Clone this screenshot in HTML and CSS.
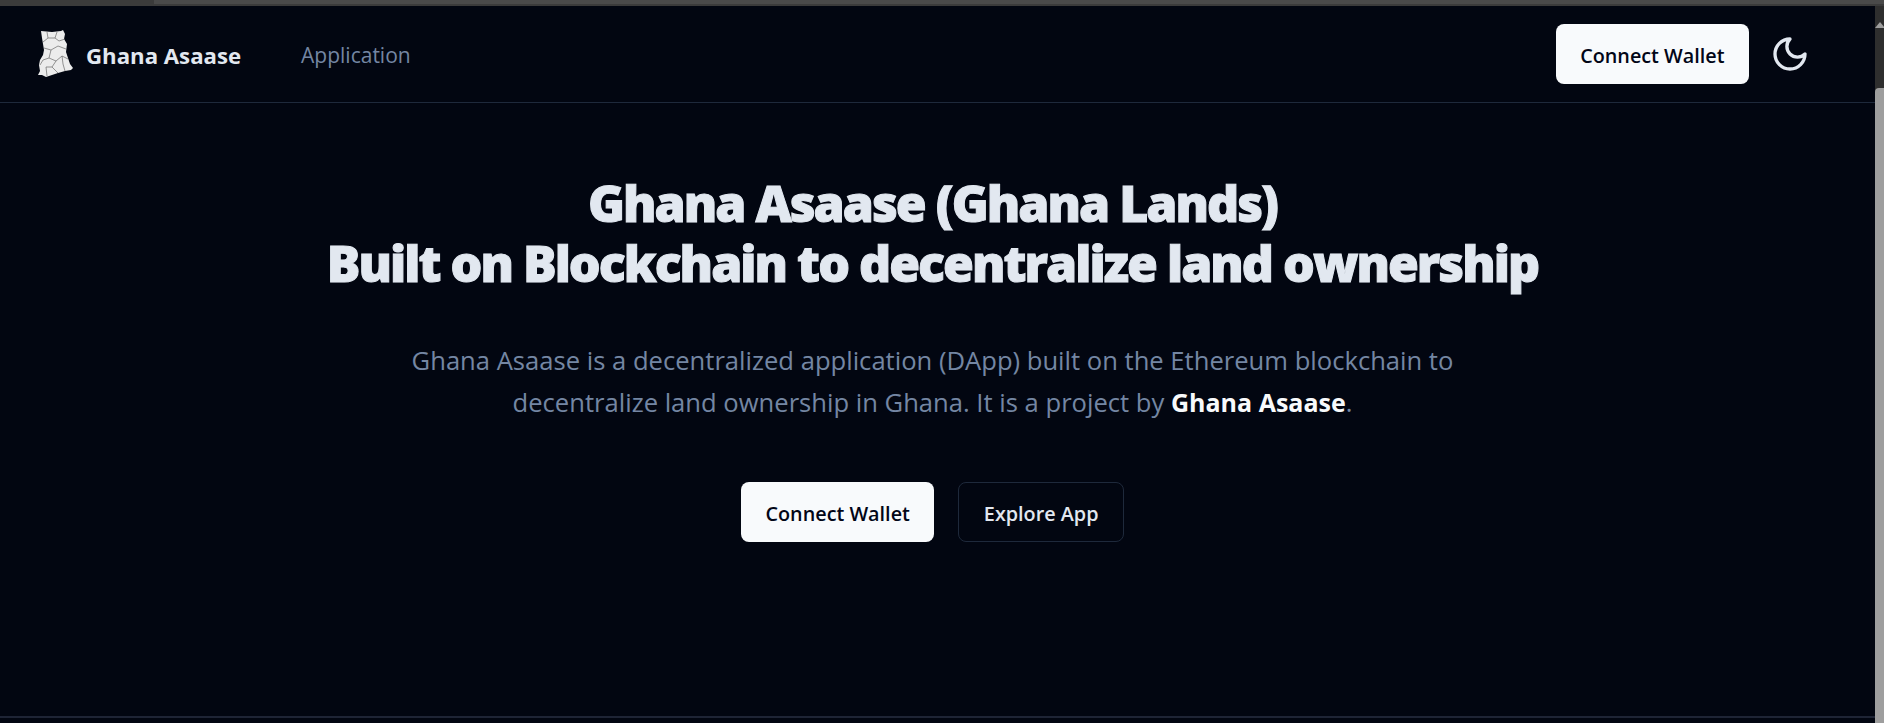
FILE: index.html
```html
<!DOCTYPE html>
<html>

<head>
  <title>Ghana Asaase</title>
  <link rel="stylesheet" href="styles.css">
</head>
<body>
<div class="top-strip"><div class="top-strip-light"></div></div>
<div class="window">
  <div class="page">
    <nav class="navbar">
      <div class="nav-left">
        <a class="brand" href="#">
          <svg class="brand-map" viewBox="0 0 36 48" width="36" height="48">
            <path fill="#ececec" d="M3 1 L14 2 L23 1 L25 0 L27 4 L26 9 L29 14 L28 22 L30 28 L32 34 L35 38 L33 40 L27 41 L20 43 L14 45 L8 47 L4 45 L0 45 L2 41 L1 35 L2 30 L5 25 L6 20 L5 14 L4 8 Z"/>
            <path fill="none" stroke="#6a6a6a" stroke-width="0.7" d="M9 2 L10 8 L5 12 M19 2 L17 8 L21 11 L27 9 M10 8 L17 8 M6 18 L13 20 L20 16 L28 19 M13 20 L11 28 L5 30 L2 35 M11 28 L18 31 L24 26 L30 29 M18 31 L14 37 L8 37 L9 46 M14 37 L20 43 M24 26 L25 34 L27 41"/>
          </svg>
          <span class="brand-name">Ghana Asaase</span>
        </a>
        <a class="nav-link" href="#">Application</a>
      </div>
      <div class="nav-right">
        <button class="btn btn-light">Connect Wallet</button>
        <svg class="moon" viewBox="0 0 24 24" width="40" height="40" fill="none" stroke="#e2e8f0" stroke-width="2" stroke-linecap="round" stroke-linejoin="round">
          <path d="M12 3a6 6 0 0 0 9 9 9 9 0 1 1-9-9Z"/>
        </svg>
      </div>
    </nav>
    <main class="hero">
      <h1>Ghana Asaase (Ghana Lands)<br>Built on Blockchain to decentralize land ownership</h1>
      <p class="lead">Ghana Asaase is a decentralized application (DApp) built on the Ethereum blockchain to decentralize land ownership in Ghana. It is a project by <b>Ghana Asaase</b>.</p>
      <div class="hero-buttons">
        <button class="btn btn-light">Connect Wallet</button>
        <button class="btn btn-dark">Explore App</button>
      </div>
    </main>
  </div>
  <div class="scrollbar">
    <div class="scroll-arrow"></div>
    <div class="scroll-thumb"></div>
  </div>
</div>
</body>

</html>
```

FILE: styles.css
```css
html, body {
  height: 100%;
}
body {
  margin: 0;
  overflow: hidden;
  display: flex;
  flex-direction: column;
  background-color: #020611;
  font-family: "Open Sans", "Noto Sans", sans-serif;
}
.top-strip {
  height: 6px;
  background-color: #3b3b3b;
  display: flex;
  justify-content: flex-end;
}
.top-strip-light {
  width: 1730px;
  height: 4px;
  background-color: #4a4a4a;
}
.window {
  flex: 1;
  display: flex;
  min-height: 0;
}
.page {
  flex: 1;
  display: flex;
  flex-direction: column;
  border-bottom: 2px solid #1e2435;
  margin-bottom: 5px;
}
.navbar {
  height: 97px;
  box-sizing: border-box;
  border-bottom: 1px solid #1e293b;
  padding: 0 65px 0 38px;
  display: flex;
  justify-content: space-between;
  align-items: center;
}
.nav-left, .nav-right, .brand {
  display: flex;
  align-items: center;
}
.brand {
  gap: 12px;
  text-decoration: none;
}
.brand-name {
  padding-top: 2px;
  color: #e2e8f0;
  font-size: 22.2px;
  font-weight: 700;
}
.nav-link {
  margin-left: 60px;
  padding-top: 2px;
  color: #7486a3;
  font-size: 21px;
  text-decoration: none;
}
.nav-right {
  gap: 21px;
}
.btn {
  height: 60px;
  padding: 2px 24.5px 0;
  border-radius: 8px;
  font-family: inherit;
  font-size: 19.8px;
  font-weight: 600;
}
.btn-light {
  background-color: #f8fafc;
  color: #020617;
  border: none;
}
.btn-dark {
  background-color: transparent;
  color: #e2e8f0;
  border: 1px solid #1e293b;
}
.hero {
  display: flex;
  flex-direction: column;
  align-items: center;
  padding: 70px 10px 0 0;
}
h1 {
  margin: 0;
  color: #e2e8f0;
  font-size: 50px;
  font-weight: 800;
  line-height: 60px;
  letter-spacing: -1.98px;
  -webkit-text-stroke: 1px #e2e8f0;
  text-align: center;
}
.lead {
  width: 1100px;
  margin: 47px 0 0;
  color: #7486a3;
  font-size: 25.6px;
  line-height: 41.5px;
  text-align: center;
}
.lead b {
  color: #f8fafc;
  font-size: 25px;
  font-weight: 700;
}
.hero-buttons {
  display: flex;
  gap: 24px;
  margin-top: 59px;
}
.scrollbar {
  width: 9px;
  background-color: #2e2e2e;
  display: flex;
  flex-direction: column;
  align-items: center;
}
.scroll-arrow {
  width: 0;
  height: 0;
  margin-top: 16px;
  border-left: 5px solid transparent;
  border-right: 5px solid transparent;
  border-bottom: 6px solid #9e9e9e;
}
.scroll-thumb {
  width: 100%;
  margin-top: 60px;
  flex: 1;
  background-color: #9e9e9e;
  border-radius: 4px 0 0 0;
}
```
